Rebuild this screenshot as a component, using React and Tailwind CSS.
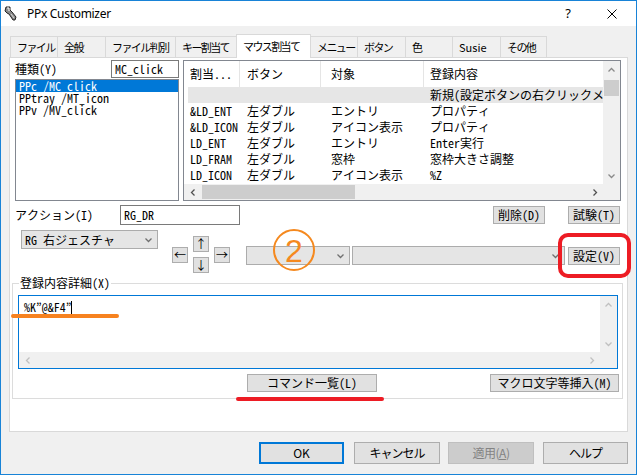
const MONO = "font-['Noto_Sans_Mono_CJK_JP','Liberation_Mono','Noto_Sans_CJK_JP',monospace] text-[12px] leading-[12px] whitespace-nowrap";
const UI = "font-['Noto_Sans_CJK_JP','Noto_Sans',sans-serif]";

const tabs = [
  { label: "ファイル", w: "w-[47px]" },
  { label: "全般", w: "w-[48px]" },
  { label: "ファイル判別", w: "w-[70px]" },
  { label: "キー割当て", w: "w-[61px]" },
  { label: "マウス割当て", w: "w-[75px]", active: true },
  { label: "メニュー", w: "w-[46px]", noLeft: true },
  { label: "ボタン", w: "w-[48px]" },
  { label: "色", w: "w-[47px]" },
  { label: "Susie", w: "w-[48px]", latin: true },
  { label: "その他", w: "w-[47px]", last: true },
];

const rows = [
  { a: "&LD_ENT", b: "左ダブル", c: "エントリ", d: "プロパティ" },
  { a: "&LD_ICON", b: "左ダブル", c: "アイコン表示", d: "プロパティ" },
  { a: "LD_ENT", b: "左ダブル", c: "エントリ", d: "Enter実行" },
  { a: "LD_FRAM", b: "左ダブル", c: "窓枠", d: "窓枠大きさ調整" },
  { a: "LD_ICON", b: "左ダブル", c: "アイコン表示", d: "%Z" },
];

function Chev({ dir = "down", color = "#606060" }) {
  const vertical = dir === "up" || dir === "down";
  const pts = {
    up: "0.5,4.5 3.5,1.5 6.5,4.5",
    down: "0.5,1.5 3.5,4.5 6.5,1.5",
    left: "4.5,0.5 1.5,3.5 4.5,6.5",
    right: "1.5,0.5 4.5,3.5 1.5,6.5",
  }[dir];
  return (
    <svg
      width={vertical ? 7 : 6}
      height={vertical ? 6 : 7}
      viewBox={vertical ? "0 0 7 6" : "0 0 6 7"}
    >
      <polyline points={pts} fill="none" stroke={color} strokeWidth="1.3" />
    </svg>
  );
}

function Btn({ children, className = "" }) {
  return (
    <div
      className={`flex shrink-0 items-center justify-center border border-[#adadad] bg-[#e1e1e1] text-black ${MONO} ${className}`}
    >
      {children}
    </div>
  );
}

function Combo({ children, className = "" }) {
  return (
    <div
      className={`flex shrink-0 items-center border border-[#acacac] bg-[#e5e5e5] pl-[3px] pr-[5px] text-black ${MONO} ${className}`}
    >
      <span className="flex-1">{children}</span>
      <Chev dir="down" color="#707070" />
    </div>
  );
}

function TitleIcon() {
  return (
    <svg width="14" height="16" viewBox="0 0 14 16" className="ml-[3px]">
      <path d="M2 1 L6 1 L6 4 L8 6 L12 11 L11 14 L9 14 L5 8 L3 7 L1 5 Z" fill="#8a8a8a" stroke="#222" strokeWidth="1" />
      <path d="M3 2 L5 2 L5 5" fill="none" stroke="#fff" strokeWidth="1" />
      <path d="M7 8 L10 12" stroke="#d8d8d8" strokeWidth="1" />
    </svg>
  );
}

export default function App() {
  return (
    <div className="relative flex h-[475px] w-[637px] flex-col overflow-hidden border border-[#1883d7] bg-[#f0f0f0]">
      {/* Title bar */}
      <div className="flex h-[25px] shrink-0 items-center bg-white">
        <TitleIcon />
        <span className="ml-[9px] font-['Noto_Sans',sans-serif] text-[12px] tracking-[-0.3px] text-black">
          PPx Customizer
        </span>
        <span className="ml-auto font-['Noto_Sans',sans-serif] text-[13px] text-black">?</span>
        <svg width="10" height="10" viewBox="0 0 10 10" className="ml-[36px] mr-[19px]">
          <path d="M0.5 0.5 L9.5 9.5 M9.5 0.5 L0.5 9.5" stroke="#000" strokeWidth="1" />
        </svg>
      </div>

      <div className="flex flex-col px-[8px]">
        {/* Tabs */}
        <div className={`mt-[8px] flex h-[23px] items-end pl-[1px] ${UI} text-[11px] text-black`}>
          {tabs.map((t) =>
            t.active ? (
              <div
                key={t.label}
                className={`relative z-10 -mb-px flex h-[24px] items-center whitespace-nowrap border-x border-t border-[#d9d9d9] bg-white pl-[6px] tracking-[-1.6px] ${t.w}`}
              >
                {t.label}
              </div>
            ) : (
              <div
                key={t.label}
                className={`flex h-[21px] items-center whitespace-nowrap border-t border-[#d9d9d9] bg-[#f0f0f0] pl-[6px] ${t.w} ${t.noLeft ? "" : "border-l"} ${t.last ? "border-r" : ""} ${t.latin ? "" : "tracking-[-1.6px]"}`}
              >
                {t.label}
              </div>
            )
          )}
        </div>

        {/* Panel */}
        <div className="flex h-[375px] flex-col border border-[#d9d9d9] bg-white text-black">
          {/* Row 1 */}
          <div className="ml-[5px] mt-[2px] flex">
            <div className="flex w-[164px] flex-col">
              <div className={`flex h-[19px] ${MONO}`}>
                <span className="flex h-[18px] items-center">種類(Y)</span>
                <div className="ml-auto flex h-[18px] w-[68px] items-center border border-[#7a7a7a] pl-[3px]">
                  MC_click
                </div>
              </div>
              <div className={`flex h-[122px] flex-col border border-[#828790] ${MONO}`}>
                <div className="flex h-[12px] items-center bg-[#0078d7] pl-[3px] text-white">PPc /MC_click</div>
                <div className="flex h-[12px] items-center pl-[3px]">PPtray /MT_icon</div>
                <div className="flex h-[12px] items-center pl-[3px]">PPv /MV_click</div>
              </div>
            </div>

            {/* List view */}
            <div className={`ml-[4px] flex h-[141px] w-[438px] flex-col border border-[#828790] ${MONO}`}>
              <div className="flex h-[123px]">
                <div className="flex w-[419px] flex-col overflow-hidden">
                  <div className="flex h-[26px] items-center">
                    <div className="flex h-full w-[56px] items-center border-r border-[#e5e5e5] pl-[6px]">割当...</div>
                    <div className="flex h-full w-[81px] items-center border-r border-[#e5e5e5] pl-[7px]">ボタン</div>
                    <div className="flex h-full w-[103px] items-center border-r border-[#e5e5e5] pl-[10px]">対象</div>
                    <div className="flex h-full flex-1 items-center pl-[6px]">登録内容</div>
                  </div>
                  <div className="ml-[4px] flex h-[16px] items-center bg-[#e6e6e6]">
                    <span className="ml-[242px]">新規(設定ボタンの右クリックメニュー)</span>
                  </div>
                  {rows.map((r) => (
                    <div key={r.a} className="flex h-[16px] items-center">
                      <div className="w-[56px] pl-[6px]">{r.a}</div>
                      <div className="w-[81px] pl-[7px]">{r.b}</div>
                      <div className="w-[103px] pl-[10px]">{r.c}</div>
                      <div className="flex-1 pl-[6px]">{r.d}</div>
                    </div>
                  ))}
                </div>
                <div className="flex w-[17px] flex-col items-center bg-[#f0f0f0]">
                  <div className="flex h-[17px] items-center">
                    <Chev dir="up" color="#8a8a8a" />
                  </div>
                  <div className="mt-[2px] h-[16px] w-[15px] bg-[#cdcdcd]" />
                  <div className="mt-auto flex h-[17px] items-center">
                    <Chev dir="down" color="#8a8a8a" />
                  </div>
                </div>
              </div>
              <div className="flex h-[16px] bg-[#f0f0f0]">
                <div className="flex w-[419px] items-center">
                  <div className="flex w-[17px] justify-center">
                    <Chev dir="left" color="#505050" />
                  </div>
                  <div className="ml-[1px] h-[14px] w-[153px] bg-[#cdcdcd]" />
                  <div className="ml-auto flex w-[17px] justify-center">
                    <Chev dir="right" color="#505050" />
                  </div>
                </div>
                <div className="w-[17px]" />
              </div>
            </div>
          </div>

          {/* Row 2 */}
          <div className={`ml-[5px] mt-[4px] flex h-[20px] items-center ${MONO}`}>
            <span className="w-[105px]">アクション(I)</span>
            <div className="flex h-[20px] w-[120px] items-center border border-[#7a7a7a] pl-[3px]">RG_DR</div>
            <Btn className="ml-[253px] h-[18px] w-[52px]">削除(D)</Btn>
            <Btn className="ml-[23px] h-[18px] w-[52px]">試験(T)</Btn>
          </div>

          {/* Row 3 */}
          <div className="mt-[4px] flex h-[44px] items-start">
            <Combo className="ml-[11px] mt-[1px] h-[19px] w-[137px]">RG 右ジェスチャ</Combo>
            <div className="ml-[14px] mt-[7px] flex items-center">
              <Btn className="h-[16px] w-[16px]">←</Btn>
              <div className="mx-[5px] flex flex-col gap-[5px]">
                <Btn className="h-[16px] w-[16px]">↑</Btn>
                <Btn className="h-[16px] w-[16px]">↓</Btn>
              </div>
              <Btn className="h-[16px] w-[16px]">→</Btn>
            </div>
            <Combo className="ml-[16px] mt-[17px] h-[19px] w-[104px]" />
            <Combo className="ml-[2px] mt-[17px] h-[19px] w-[213px]" />
            <Btn className="ml-[3px] mt-[18px] h-[18px] w-[52px]">設定(V)</Btn>
          </div>

          {/* Group box */}
          <div className="relative ml-[2px] mt-[10px] flex h-[116px] w-[611px] flex-col border border-[#dcdcdc]">
            <span className={`absolute -top-[7px] left-[6px] bg-white px-[1px] ${MONO}`}>登録内容詳細(X)</span>
            <div className="ml-[5px] mt-[11px] flex h-[74px] w-[600px] flex-col border border-[#0078d7]">
              <div className="flex h-[56px]">
                <div className={`flex-1 pl-[5px] pt-[3px] ${MONO}`}>
                  <span>%K”@&F4”</span>
                  <span className="inline-block h-[13px] w-px translate-y-[2px] bg-black" />
                </div>
                <div className="flex w-[17px] flex-col items-center bg-[#f0f0f0]">
                  <div className="flex h-[17px] items-center">
                    <Chev dir="up" color="#c0c0c0" />
                  </div>
                  <div className="mt-auto flex h-[17px] items-center">
                    <Chev dir="down" color="#c0c0c0" />
                  </div>
                </div>
              </div>
              <div className="flex h-[16px] items-center bg-[#f0f0f0]">
                <div className="flex w-[17px] justify-center">
                  <Chev dir="left" color="#c0c0c0" />
                </div>
                <div className="ml-auto mr-[17px] flex w-[17px] justify-center">
                  <Chev dir="right" color="#c0c0c0" />
                </div>
              </div>
            </div>
            <div className="mt-[5px] flex">
              <Btn className="ml-[234px] h-[18px] w-[130px]">コマンド一覧(L)</Btn>
              <Btn className="ml-[113px] h-[18px] w-[129px]">マクロ文字等挿入(M)</Btn>
            </div>
          </div>
        </div>

        {/* Dialog buttons */}
        <div className={`mt-[10px] flex h-[22px] ${UI} text-[12px]`}>
          <div className="ml-[250px] flex w-[85px] items-center justify-center border-2 border-[#0078d7] bg-[#e1e1e1] text-black">
            OK
          </div>
          <div className="ml-[10px] flex w-[86px] items-center justify-center border border-[#adadad] bg-[#e1e1e1] tracking-[-1px] text-black">
            キャンセル
          </div>
          <div className="ml-[8px] flex w-[86px] items-center justify-center border border-[#bfbfbf] bg-[#cccccc] tracking-[-0.5px] text-[#838383]">
            適用(<span className="underline">A</span>)
          </div>
          <div className="ml-[9px] flex w-[85px] items-center justify-center border border-[#adadad] bg-[#e1e1e1] tracking-[-1px] text-black">
            ヘルプ
          </div>
        </div>
      </div>

      {/* Annotations */}
      <svg width="44" height="44" viewBox="0 0 44 44" className="absolute left-[271px] top-[227px]">
        <circle cx="22" cy="22" r="20" fill="none" stroke="#f5891f" strokeWidth="2" />
        <text x="22" y="34" textAnchor="middle" fontSize="32" fontFamily="Liberation Sans, sans-serif" fill="#f5891f">
          2
        </text>
      </svg>
      <div className="absolute left-[557px] top-[232px] h-[45px] w-[73px] rounded-[10px] border-4 border-[#ed1c24]" />
      <div className="absolute left-[10px] top-[313px] h-[4px] w-[108px] rounded-full bg-[#f7821f]" />
      <div className="absolute left-[235px] top-[396px] h-[4px] w-[148px] rounded-full bg-[#ed1c24]" />
    </div>
  );
}
